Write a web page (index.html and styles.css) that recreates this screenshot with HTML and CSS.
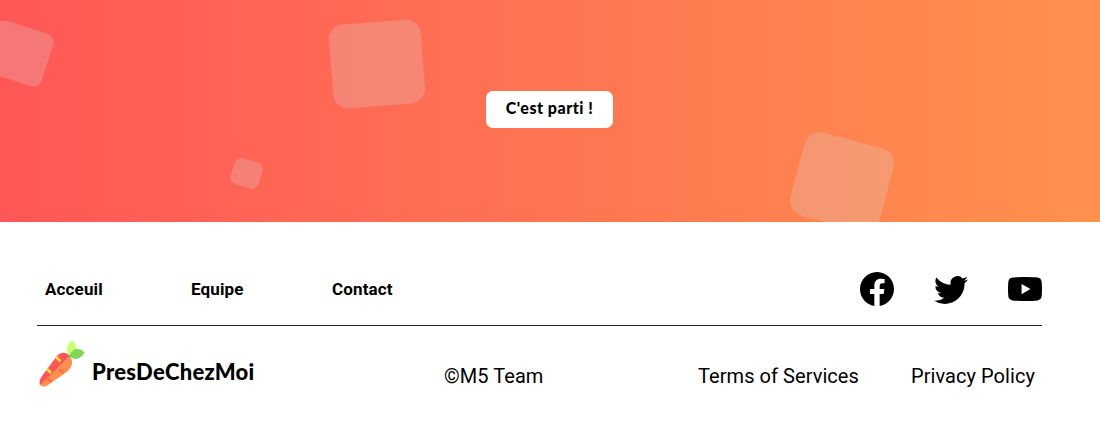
FILE: index.html
```html
<!DOCTYPE html>
<html lang="fr">
<head>
<meta charset="utf-8">
<title>PresDeChezMoi</title>
<link rel="stylesheet" href="styles.css">
</head>
<body>
<section class="hero">
  <span class="shape shape-a"></span>
  <span class="shape shape-b"></span>
  <span class="shape shape-c"></span>
  <span class="shape shape-d"></span>
  <button class="cta">C'est parti !</button>
</section>
<footer class="footer">
  <div class="top">
    <nav class="nav">
      <a class="n1">Acceuil</a><a class="n2">Equipe</a><a class="n3">Contact</a>
    </nav>
    <div class="social">
      <svg viewBox="0 0 16 16"><path d="M16 8.049c0-4.446-3.582-8.05-8-8.05C3.58 0-.002 3.603-.002 8.05c0 4.017 2.926 7.347 6.75 7.951v-5.625h-2.03V8.05H6.75V6.275c0-2.017 1.195-3.131 3.022-3.131.876 0 1.791.157 1.791.157v1.98h-1.009c-.993 0-1.303.621-1.303 1.258v1.51h2.218l-.354 2.326H9.25V16c3.824-.604 6.75-3.934 6.75-7.951z"/></svg>
      <svg viewBox="0 0 16 16"><path d="M5.026 15c6.038 0 9.341-5.003 9.341-9.334 0-.14 0-.282-.006-.422A6.685 6.685 0 0 0 16 3.542a6.658 6.658 0 0 1-1.889.518 3.301 3.301 0 0 0 1.447-1.817 6.533 6.533 0 0 1-2.087.793A3.286 3.286 0 0 0 7.875 6.03a9.325 9.325 0 0 1-6.767-3.429 3.289 3.289 0 0 0 1.018 4.382A3.323 3.323 0 0 1 .64 6.575v.045a3.288 3.288 0 0 0 2.632 3.218 3.203 3.203 0 0 1-.865.115 3.23 3.23 0 0 1-.614-.057 3.283 3.283 0 0 0 3.067 2.277A6.588 6.588 0 0 1 .78 13.58a6.32 6.32 0 0 1-.78-.045A9.344 9.344 0 0 0 5.026 15z"/></svg>
      <svg viewBox="0 0 34 34"><path fill-rule="evenodd" d="M17 5c5 0 10 .2 12.500.6 2.500.4 3.900 1.800 4.200 4.300.4 4.500.4 9.700 0 14.200-.3 2.500-1.700 3.900-4.200 4.300-5 .7-20 .7-25 0C2 28 .6 26.600.3 24.100c-.4-4.500-.4-9.700 0-14.200C.6 7.400 2 6 4.500 5.600 7 5.200 12 5 17 5zM13.600 12v10.200l8.800-5.100z"/></svg>
    </div>
  </div>
  <div class="bottom">
    <div class="brand">
      <svg class="carrot" viewBox="0 0 48 48">
        <path fill="#ff5757" d="M32 15C28 10.500 22 11 18.500 15.500L3 36.500C1 40 1 43 3 44.500z"/>
        <path fill="#ff914d" d="M32 15c4 6 2 12.500-4 16.500L10 44c-3 2-6 2-7.500 0z"/>
        <path fill="#c9ff72" d="M31.500 15C27 9.500 28 3.500 34.500-.5c5 4.500 5.500 10-3 15.500z"/>
        <path fill="#7ed957" d="M31.500 15c2-7.500 9-9.500 15.300-3.500-4.300 7-10.300 8.500-15.300 3.500z"/>
        <path stroke="#ffde3b" stroke-width="2.500" d="m18 16 4.500 4.500M9 28l4 4"/>
        <path stroke="#ff6b4f" stroke-width="2.500" d="m21.500 28 4 4M9.500 37l4 4"/>
        <path stroke="#00bf63" stroke-width="1" d="m30.500 16 2.500-2"/>
      </svg>
      <span class="name">PresDeChezMoi</span>
    </div>
    <span class="copy">©M5 Team</span>
    <a class="terms">Terms of Services</a>
    <a class="privacy">Privacy Policy</a>
  </div>
</footer>
</body>
</html>
```
FILE: styles.css
```css
body { margin: 0; background: #fff; color: #000; font-family: Roboto, sans-serif; }
.hero {
  position: relative;
  height: 221.5px;
  overflow: hidden;
  display: flex;
  justify-content: center;
  align-items: flex-start;
  background: linear-gradient(90deg, #ff5757, #ff914d);
}
.shape { position: absolute; background: rgba(217, 217, 217, 0.25); }
.shape-a { left: -11.5px; top: 25.5px; width: 60px; height: 54.5px; border-radius: 9px; transform: rotate(18deg); }
.shape-b { left: 331px; top: 21.5px; width: 92px; height: 84px; border-radius: 15px; transform: rotate(-4.5deg); }
.shape-c { left: 232px; top: 159.5px; width: 29px; height: 27px; border-radius: 7px; transform: rotate(17deg); }
.shape-d { left: 796px; top: 139px; width: 92px; height: 86px; border-radius: 16px; transform: rotate(15deg); }
.cta {
  width: 127px;
  height: 37px;
  margin: 91px 1px 0 0;
  padding: 0 0 3px;
  border: 0;
  border-radius: 7px;
  background: #fff;
  color: #000;
  font: 900 16px/34px Lato, sans-serif;
  letter-spacing: 0.5px;
  white-space: nowrap;
}
.footer { padding: 50px 58px 0 37px; }
.top { display: flex; justify-content: space-between; height: 53px; border-bottom: 1px solid #222; }
.nav { display: flex; padding: 7px 0 0 8px; font-size: 17px; font-weight: 700; line-height: 20px; letter-spacing: 0.15px; }
.n1 { width: 146px; }
.n2 { width: 141px; }
.social { display: flex; gap: 40px; }
.social svg { width: 34px; height: 34px; }
.bottom { display: flex; font-size: 20px; line-height: 24px; letter-spacing: 0.06px; white-space: nowrap; }
.brand { display: flex; width: 407px; }
.carrot { width: 48px; height: 48px; margin: 15px 6px 0 1px; fill: none; overflow: visible; }
.name { margin-top: 33px; font: 900 22px/26px Lato, sans-serif; letter-spacing: 0.27px; }
.copy { width: 254px; margin-top: 38px; }
.terms { width: 213px; margin-top: 38px; }
.privacy { margin-top: 38px; }
```
